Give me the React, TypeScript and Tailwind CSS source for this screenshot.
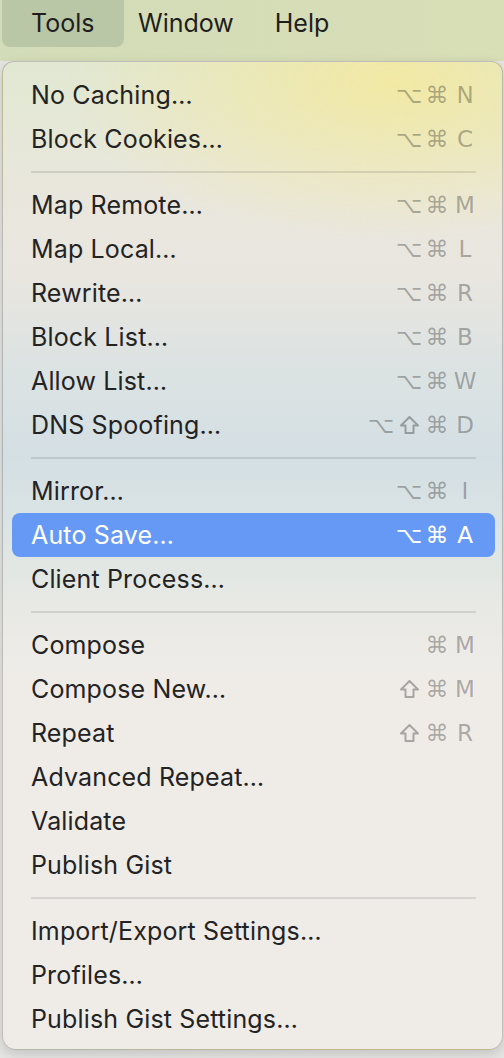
import React from "react";

type Item = { label: string; keys?: string[]; active?: boolean };
type Group = Item[];

const groups: Group[] = [
  [
    { label: "No Caching…", keys: ["⌥", "⌘", "N"] },
    { label: "Block Cookies…", keys: ["⌥", "⌘", "C"] },
  ],
  [
    { label: "Map Remote…", keys: ["⌥", "⌘", "M"] },
    { label: "Map Local…", keys: ["⌥", "⌘", "L"] },
    { label: "Rewrite…", keys: ["⌥", "⌘", "R"] },
    { label: "Block List…", keys: ["⌥", "⌘", "B"] },
    { label: "Allow List…", keys: ["⌥", "⌘", "W"] },
    { label: "DNS Spoofing…", keys: ["⌥", "⇧", "⌘", "D"] },
  ],
  [
    { label: "Mirror…", keys: ["⌥", "⌘", "I"] },
    { label: "Auto Save…", keys: ["⌥", "⌘", "A"], active: true },
    { label: "Client Process…" },
  ],
  [
    { label: "Compose", keys: ["⌘", "M"] },
    { label: "Compose New…", keys: ["⇧", "⌘", "M"] },
    { label: "Repeat", keys: ["⇧", "⌘", "R"] },
    { label: "Advanced Repeat…" },
    { label: "Validate" },
    { label: "Publish Gist" },
  ],
  [
    { label: "Import/Export Settings…" },
    { label: "Profiles…" },
    { label: "Publish Gist Settings…" },
  ],
];

// outline shift arrow, as macOS draws it
function ShiftGlyph() {
  return (
    <svg width="21" height="20" viewBox="0 0 21 20" className="inline-block">
      <path
        d="M10.5 2 L19 10.5 H14.5 V18 H6.5 V10.5 H2 Z"
        fill="none"
        stroke="currentColor"
        strokeWidth="2"
        strokeLinejoin="round"
      />
    </svg>
  );
}

function MenuRow({ item }: { item: Item }) {
  return (
    <div
      className={
        item.active
          ? "flex items-center h-[44px] rounded-[8px] bg-[#6699f6] text-white pl-[19px] pr-[16px]"
          : "flex items-center h-[44px] rounded-[8px] text-[#232323] pl-[19px] pr-[16px]"
      }
    >
      <span className="flex-1 text-[25px] leading-none tracking-[0.15px]">{item.label}</span>
      {item.keys && (
        <span
          className={
            item.active
              ? "flex items-center text-white text-[23px] leading-none"
              : "flex items-center text-black/30 text-[23px] leading-none"
          }
        >
          {item.keys.map((k, i) => (
            <span
              key={i}
              className="w-[28px] flex justify-center font-['DejaVu_Sans',sans-serif]"
            >
              {k === "⇧" ? <ShiftGlyph /> : k}
            </span>
          ))}
        </span>
      )}
    </div>
  );
}

export default function App() {
  return (
    <div className="relative w-[504px] h-[1058px] overflow-hidden bg-[#e5e5e3] font-['Inter','Liberation_Sans',sans-serif]">
      {/* Menu bar */}
      <div className="h-[61px] bg-[linear-gradient(90deg,#d3dcb8,#d8deb6)] flex items-start text-[25px] text-[#1e1e1e]">
        <div className="ml-[2px] w-[122px] h-[47px] rounded-b-[8px] bg-[#b9c7a7] flex items-center pl-[29px]">
          Tools
        </div>
        <div className="h-[47px] flex items-center ml-[14px]">Window</div>
        <div className="h-[47px] flex items-center ml-[41px]">Help</div>
      </div>

      {/* Dropdown */}
      <div className="ml-[2px] w-[501px] h-[989px] rounded-b-[14px] rounded-t-[12px] border border-black/20 shadow-[0_4px_12px_rgba(0,0,0,0.15)] bg-[radial-gradient(ellipse_65%_16%_at_78%_2%,#f2e9a4_0%,rgba(242,233,164,0)_100%),linear-gradient(180deg,#e1e8d2_0%,#e9e7dc_12%,#e9e6e0_22%,#dde3e2_30%,#d4dfe4_40%,#dbe4e4_47%,#e8e9e4_55%,#efece8_62%,#efece8_100%)] pt-[11px] pl-[9px] pr-[7px]">
        {groups.map((g, gi) => (
          <div key={gi}>
            {gi > 0 && (
              <div className="h-[22px] flex items-center px-[19px]">
                <div className="h-[2px] w-full bg-black/10" />
              </div>
            )}
            {g.map((it) => (
              <MenuRow key={it.label} item={it} />
            ))}
          </div>
        ))}
      </div>
    </div>
  );
}
